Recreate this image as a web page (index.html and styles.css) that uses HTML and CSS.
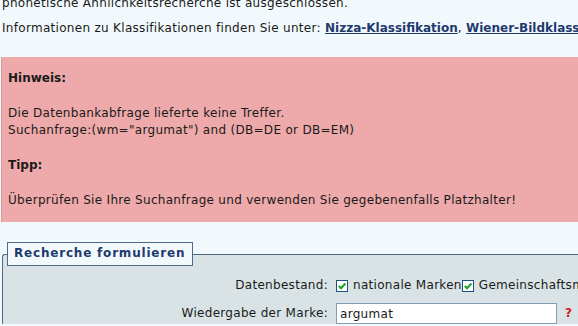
FILE: index.html
```html
<!DOCTYPE html>
<html lang="de">
<head>
    <meta charset="UTF-8">
    <title>Recherche</title>
    <link rel="stylesheet" href="styles.css">
</head>
<body>
    <div class="page">
        <p class="intro">phonetische Ähnlichkeitsrecherche ist ausgeschlossen.</p>
        <p class="intro">Informationen zu Klassifikationen finden Sie unter: <a href="#">Nizza-Klassifikation</a>, <a href="#">Wiener-Bildklassifikation</a></p>

        <div class="notice">
            <p><b>Hinweis:</b></p>
            <p>Die Datenbankabfrage lieferte keine Treffer.<br>Suchanfrage:(wm="argumat") and (DB=DE or DB=EM)</p>
            <p><b>Tipp:</b></p>
            <p>Überprüfen Sie Ihre Suchanfrage und verwenden Sie gegebenenfalls Platzhalter!</p>
        </div>

        <fieldset class="search">
            <legend>Recherche formulieren</legend>
            <div class="form-grid">
                <span class="label">Datenbestand:</span>
                <div class="field">
                    <span class="check"><svg viewBox="0 0 10 10" width="10" height="10"><path d="M1.8 5 L4 7.3 L8.4 2.5" fill="none" stroke="#21a121" stroke-width="2"/></svg></span>
                    <span class="option">nationale Marken</span>
                    <span class="check"><svg viewBox="0 0 10 10" width="10" height="10"><path d="M1.8 5 L4 7.3 L8.4 2.5" fill="none" stroke="#21a121" stroke-width="2"/></svg></span>
                    <span class="option">Gemeinschaftsmarken</span>
                </div>
                <span class="label">Wiedergabe der Marke:</span>
                <div class="field">
                    <input type="text" class="text-input" value="argumat">
                    <span class="help">?</span>
                </div>
            </div>
        </fieldset>
    </div>
</body>
</html>
```

FILE: styles.css
```css
body {
    margin: 0;
    background-color: #f2f9fc;
    font-family: "DejaVu Sans", Verdana, sans-serif;
    font-size: 12px;
    line-height: 17px;
    letter-spacing: 0.3px;
    color: #1a1a1a;
    overflow: hidden;
}

b {
    letter-spacing: 0;
}

.page {
    margin-top: -5px;
    padding: 0 0 0 2px;
    white-space: nowrap;
}

.intro {
    margin: 0 0 8px 0;
}

.intro a {
    color: #1f3a6e;
    font-weight: bold;
    letter-spacing: 0;
}

.notice {
    background-color: #eeaaaa;
    margin: 20px 0 0 -1px;
    padding: 13px 6px 13px 6px;
    border-left: 1px solid #d99a9a;
}

.notice p {
    margin: 0 0 18px 0;
}

.notice p:last-child {
    margin-bottom: 0;
}

.search {
    margin: 20px 0 0 0;
    padding: 11px 0 0 0;
    background-color: #d9e3e6;
    border: 1px solid #4d6a88;
    border-radius: 3px 0 0 0;
    border-right: none;
    border-bottom: none;
}

.search legend {
    margin-left: 4px;
    padding: 2px 7px 3px 6px;
    background-color: #f2f9fc;
    border: 1px solid #4d6a88;
    color: #1f3a6e;
    font-weight: bold;
    letter-spacing: 0.8px;
}

.form-grid {
    display: grid;
    grid-template-columns: 325px auto;
    column-gap: 8px;
    row-gap: 9px;
    align-items: center;
}

.label {
    text-align: right;
}

.field {
    display: flex;
    align-items: center;
}

.check {
    display: inline-flex;
    align-items: center;
    justify-content: center;
    width: 10px;
    height: 10px;
    background-color: #ffffff;
    border: 1px solid #1c5180;
}

.option {
    margin: 0 0 0 5px;
}

.text-input {
    width: 221px;
    height: 21px;
    box-sizing: border-box;
    margin: 0;
    padding: 0 3px;
    border: 1px solid #7f9db9;
    background-color: #ffffff;
    font-family: "DejaVu Sans", Verdana, sans-serif;
    font-size: 12px;
    letter-spacing: 0.3px;
    color: #1a1a1a;
}

.help {
    margin-left: 8px;
    color: #d01818;
    font-weight: bold;
}
```
